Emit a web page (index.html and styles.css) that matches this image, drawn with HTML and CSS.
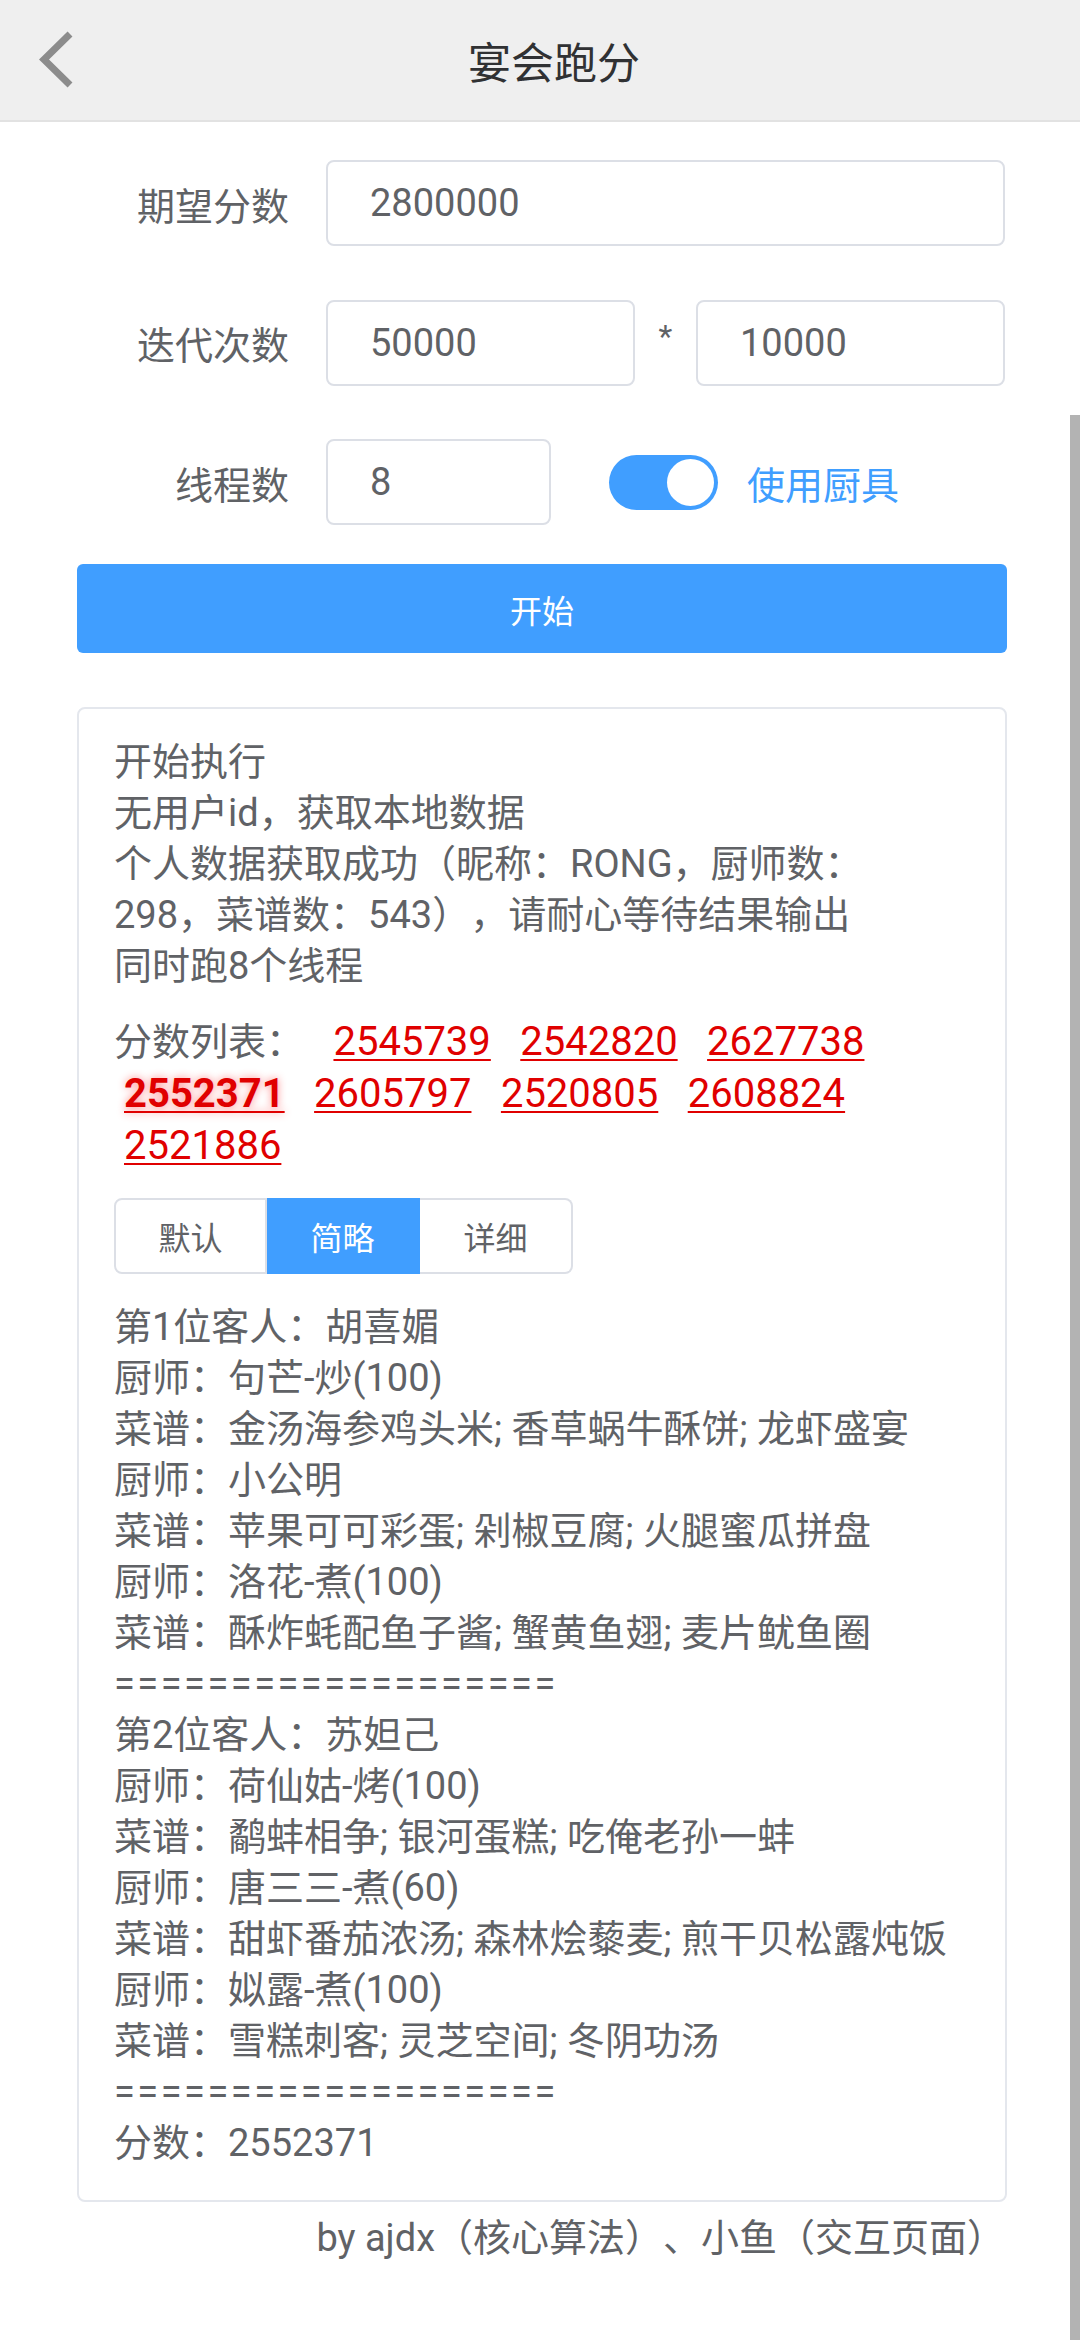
FILE: index.html
```html
<!DOCTYPE html>
<html lang="zh-CN">
<head>
<meta charset="utf-8">
<title>宴会跑分</title>
<link rel="stylesheet" href="styles.css">
</head>
<body>
<header class="header">
  <div class="back">
    <svg width="44" height="60" viewBox="0 0 44 60"><path d="M34 4 L8 29.5 L34 55" fill="none" stroke="#8c8c8c" stroke-width="7"/></svg>
  </div>
  <div class="title">宴会跑分</div>
  <div class="spacer"></div>
</header>

<main class="main">
  <div class="row">
    <div class="label">期望分数</div>
    <div class="input grow">2800000</div>
  </div>
  <div class="row">
    <div class="label">迭代次数</div>
    <div class="input half">50000</div>
    <div class="star">*</div>
    <div class="input half">10000</div>
  </div>
  <div class="row">
    <div class="label">线程数</div>
    <div class="input small">8</div>
    <div class="switch"><span class="knob"></span></div>
    <div class="switch-label">使用厨具</div>
  </div>
  <button class="start">开始</button>

  <section class="log">
    <div class="lines">
      <div>开始执行</div>
      <div>无用户id，获取本地数据</div>
      <div>个人数据获取成功（昵称：RONG，厨师数：</div>
      <div>298，菜谱数：543），请耐心等待结果输出</div>
      <div>同时跑8个线程</div>
    </div>
    <div class="scores"><span class="scores-label">分数列表：</span> <a class="score">2545739</a> <a class="score">2542820</a> <a class="score">2627738</a> <a class="score best">2552371</a> <a class="score">2605797</a> <a class="score">2520805</a> <a class="score">2608824</a> <a class="score">2521886</a></div>
    <div class="tabs">
      <div class="tab">默认</div>
      <div class="tab active">简略</div>
      <div class="tab">详细</div>
    </div>
    <div class="lines result">
      <div>第1位客人：胡喜媚</div>
      <div>厨师：句芒-炒(100)</div>
      <div>菜谱：金汤海参鸡头米; 香草蜗牛酥饼; 龙虾盛宴</div>
      <div>厨师：小公明</div>
      <div>菜谱：苹果可可彩蛋; 剁椒豆腐; 火腿蜜瓜拼盘</div>
      <div>厨师：洛花-煮(100)</div>
      <div>菜谱：酥炸蚝配鱼子酱; 蟹黄鱼翅; 麦片鱿鱼圈</div>
      <div class="rule">===================</div>
      <div>第2位客人：苏妲己</div>
      <div>厨师：荷仙姑-烤(100)</div>
      <div>菜谱：鹬蚌相争; 银河蛋糕; 吃俺老孙一蚌</div>
      <div>厨师：唐三三-煮(60)</div>
      <div>菜谱：甜虾番茄浓汤; 森林烩藜麦; 煎干贝松露炖饭</div>
      <div>厨师：姒露-煮(100)</div>
      <div>菜谱：雪糕刺客; 灵芝空间; 冬阴功汤</div>
      <div class="rule">===================</div>
      <div>分数：2552371</div>
    </div>
  </section>

  <div class="footer">by ajdx（核心算法）、小鱼（交互页面）</div>
</main>

<div class="scrollbar"></div>
</body>
</html>
```
FILE: styles.css
```css
* { box-sizing: border-box; }
html, body { margin: 0; padding: 0; background: #fff; }
body {
  font-family: Roboto, "Noto Sans CJK SC", sans-serif;
  color: #606266;
  font-size: 38px;
  width: 1080px;
  min-height: 2340px;
  text-spacing-trim: space-all;
}
.header {
  height: 122px;
  background: #efefef;
  border-bottom: 2px solid #e2e2e2;
  display: flex;
  align-items: center;
}
.back { width: 110px; padding-left: 36px; display: flex; align-items: center; }
.back svg { display: block; }
.title { flex: 1; text-align: center; font-size: 43px; color: #303133; }
.spacer { width: 82px; }

.main { padding: 38px 73px 0 77px; }
.row { display: flex; align-items: center; height: 86px; margin-bottom: 53.5px; }
.row:nth-child(3) { margin-bottom: 39px; }
.label { width: 212px; margin-right: 37px; text-align: right; color: #606266; }
.input {
  height: 86px;
  border: 2px solid #dcdfe6;
  border-radius: 8px;
  padding-left: 42px;
  display: flex;
  align-items: center;
  color: #606266;
}
.grow { width: 679px; }
.half { width: 309px; }
.small { width: 225px; }
.star { width: 61px; align-self: flex-start; text-align: center; font-size: 32px; line-height: 40px; padding-top: 16px; }
.switch {
  width: 109px; height: 55px; margin-left: 58px;
  background: #409eff; border-radius: 28px;
  display: flex; align-items: center; justify-content: flex-end;
  padding-right: 4px;
}
.knob { width: 47px; height: 47px; border-radius: 50%; background: #fff; }
.switch-label { margin-left: 29px; color: #409eff; }

.start {
  display: block; width: 930px; height: 89px;
  background: #409eff; color: #fff; border: 0; border-radius: 6px;
  font-family: inherit; font-size: 32px;
}

.log {
  margin-top: 54px;
  width: 930px;
  border: 2px solid #e4e7ed;
  border-radius: 8px;
  padding: 28px 36px 31px 35px;
}
.lines { line-height: 51px; }
.rule { letter-spacing: 2.5px; }
.scores { margin-top: 24px; line-height: 52px; }
.scores-label { margin-right: 10px; }
.score {
  color: #e00000;
  font-size: 40px;
  text-decoration: underline;
  text-decoration-thickness: 2px;
  text-underline-offset: 4px;
  margin: 0 10px;
}
.score.best { font-weight: 700; text-shadow: 0 0 8px rgba(255, 0, 0, 0.45); }

.tabs { margin-top: 26px; display: flex; width: 460px; }
.tab {
  width: 153px; height: 76px;
  border: 2px solid #dcdfe6;
  display: flex; align-items: center; justify-content: center;
  font-size: 32px; color: #606266;
}
.tab + .tab { border-left: 0; }
.tab:first-child { border-radius: 8px 0 0 8px; }
.tab:last-child { border-radius: 0 8px 8px 0; }
.tab.active { background: #409eff; border-color: #409eff; color: #fff; }
.result { margin-top: 28px; }

.footer { margin-top: 11px; text-align: right; padding-right: 2px; line-height: 51px; width: 930px; }

.scrollbar { position: fixed; right: 0; top: 415px; bottom: 0; width: 10px; background: #b3b3b3; }
```
